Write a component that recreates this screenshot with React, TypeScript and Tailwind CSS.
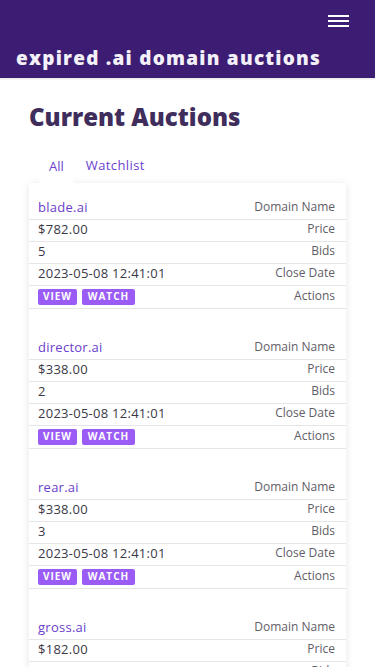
const auctions = [
  { domain: 'blade.ai', price: '$782.00', bids: 5, close: '2023-05-08 12:41:01' },
  { domain: 'director.ai', price: '$338.00', bids: 2, close: '2023-05-08 12:41:01' },
  { domain: 'rear.ai', price: '$338.00', bids: 3, close: '2023-05-08 12:41:01' },
  { domain: 'gross.ai', price: '$182.00', bids: 4, close: '2023-05-08 12:41:01' },
  { domain: 'pilot.ai', price: '$150.00', bids: 1, close: '2023-05-08 12:41:01' },
];

function Row({ label, children }: { label: string; children: React.ReactNode }) {
  return (
    <div className="flex h-[22px] items-center justify-between border-b border-[#e6e6e8] pl-[9px] pr-[11px]">
      <div className="text-[13px] tracking-[0.02em] text-[#3a3846]">{children}</div>
      <div className="-mt-[2px] text-[12px] text-[#5f5d66]">{label}</div>
    </div>
  );
}

export default function App() {
  return (
    <div className="min-h-screen bg-white font-['Open_Sans',sans-serif]">
      <header className="flex h-[78px] flex-col bg-[#3c1d73] px-4 shadow-[0_1px_2px_rgba(0,0,0,0.12)]">
        <div className="flex justify-end pr-[10px] pt-[15px]">
          <button className="flex w-[21px] flex-col gap-[3px]" aria-label="menu">
            <span className="h-[2px] bg-white" />
            <span className="h-[2px] bg-white" />
            <span className="h-[2px] bg-white" />
          </button>
        </div>
        <h1 className="mt-[22px] text-[19px] font-extrabold leading-none tracking-[0.065em] text-[#f3f0f8]">
          expired .ai domain auctions
        </h1>
      </header>

      <main className="px-[29px]">
        <h2 className="pt-[24px] text-[24px] font-extrabold leading-[30px] text-[#3f2d5c]">Current Auctions</h2>

        <div className="mt-[20px] flex pl-[10px] text-[13px]">
          <button className="bg-white px-[10px] pb-[6px] pt-[5px] text-[#6a3fd0]">All</button>
          <button className="ml-[12px] pb-[6px] pt-[3px] tracking-[0.03em] text-[#6a3fd0]">Watchlist</button>
        </div>

        <div className="bg-white pt-[15px] shadow-[0_1px_8px_rgba(0,0,0,0.1)]">
          {auctions.map((a, i) => (
            <div key={a.domain} className={i > 0 ? 'mt-[29px]' : ''}>
              <Row label="Domain Name">
                <a href="#" className="text-[#6b40cc]">{a.domain}</a>
              </Row>
              <Row label="Price">{a.price}</Row>
              <Row label="Bids">{a.bids}</Row>
              <Row label="Close Date">{a.close}</Row>
              <div className="flex h-[23px] items-center justify-between border-b border-[#e6e6e8] pl-[9px] pr-[11px]">
                <div className="flex gap-[5px]">
                  <button className="h-[16px] w-[39px] rounded-[2px] bg-[#9b5cf6] text-[10px] font-bold tracking-[0.1em] text-white">
                    VIEW
                  </button>
                  <button className="h-[16px] w-[53px] rounded-[2px] bg-[#9b5cf6] text-[10px] font-bold tracking-[0.1em] text-white">
                    WATCH
                  </button>
                </div>
                <div className="-mt-[2px] text-[12px] text-[#5f5d66]">Actions</div>
              </div>
            </div>
          ))}
        </div>
      </main>
    </div>
  );
}
